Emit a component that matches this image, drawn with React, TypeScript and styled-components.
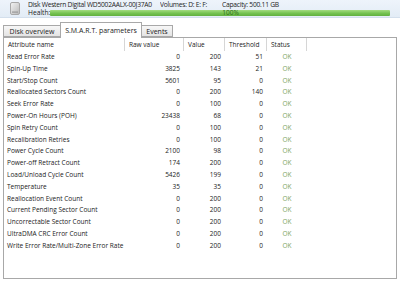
import { FC } from 'react';
import styled, { createGlobalStyle } from 'styled-components';

const GlobalStyle = createGlobalStyle`
  html, body {
    margin: 0;
    padding: 0;
    background: #ffffff;
  }
  body {
    font-family: "Open Sans", "Liberation Sans", sans-serif;
    color: #2b2b2b;
  }
`;

type Row = [string, number, number, number];

const rows: Row[] = [
  ['Read Error Rate', 0, 200, 51],
  ['Spin-Up Time', 3825, 143, 21],
  ['Start/Stop Count', 5601, 95, 0],
  ['Reallocated Sectors Count', 0, 200, 140],
  ['Seek Error Rate', 0, 100, 0],
  ['Power-On Hours (POH)', 23438, 68, 0],
  ['Spin Retry Count', 0, 100, 0],
  ['Recalibration Retries', 0, 100, 0],
  ['Power Cycle Count', 2100, 98, 0],
  ['Power-off Retract Count', 174, 200, 0],
  ['Load/Unload Cycle Count', 5426, 199, 0],
  ['Temperature', 35, 35, 0],
  ['Reallocation Event Count', 0, 200, 0],
  ['Current Pending Sector Count', 0, 200, 0],
  ['Uncorrectable Sector Count', 0, 200, 0],
  ['UltraDMA CRC Error Count', 0, 200, 0],
  ['Write Error Rate/Multi-Zone Error Rate', 0, 200, 0],
];

const columns = '121px 59px 41px 42px 40px 1fr';

const App: FC = () => {
  return (
    <Window>
      <GlobalStyle />
      <DiskHeader>
        <DiskIcon>
          <svg width="10" height="13" viewBox="0 0 10 13">
            <defs>
              <linearGradient id="dk" x1="0" y1="0" x2="1" y2="1">
                <stop offset="0" stopColor="#f4f4f4" />
                <stop offset="1" stopColor="#b8b8b8" />
              </linearGradient>
            </defs>
            <rect x="0.5" y="0.5" width="9" height="12" rx="1.5" fill="url(#dk)" stroke="#a8a8a8" />
            <rect x="2" y="9.5" width="6" height="1.2" fill="#9a9a9a" />
          </svg>
        </DiskIcon>
        <HeaderText>
          <InfoLine>
            <InfoItem $w={132}>Disk Western Digital WD5002AALX-00J37A0</InfoItem>
            <InfoItem $w={62}>Volumes: D: E: F:</InfoItem>
            <InfoItem>Capacity: 500.11 GB</InfoItem>
          </InfoLine>
          <HealthLine>
            <span>Health:</span>
            <HealthBar>
              <HealthLabel>100%</HealthLabel>
            </HealthBar>
          </HealthLine>
        </HeaderText>
      </DiskHeader>

      <Tabs>
        <Tab $w={58}>Disk overview</Tab>
        <Tab $w={82} $active>S.M.A.R.T. parameters</Tab>
        <Tab $w={32}>Events</Tab>
      </Tabs>

      <Panel>
        <HeadRow>
          <HeadCell>Attribute name</HeadCell>
          <HeadCell>Raw value</HeadCell>
          <HeadCell>Value</HeadCell>
          <HeadCell>Threshold</HeadCell>
          <HeadCell>Status</HeadCell>
          <HeadCell $last />
        </HeadRow>
        {rows.map(([name, raw, value, threshold]) => (
          <DataRow key={name}>
            <Cell>{name}</Cell>
            <Cell $align="right">{raw}</Cell>
            <Cell $align="right">{value}</Cell>
            <Cell $align="right">{threshold}</Cell>
            <Status>OK</Status>
            <Cell />
          </DataRow>
        ))}
      </Panel>
    </Window>
  );
};

const Window = styled.div`
  width: 400px;
  height: 284px;
  overflow: hidden;
  font-size: 6.5px;
`;

const DiskHeader = styled.div`
  display: flex;
  align-items: center;
  height: 18px;
  padding-left: 10px;
  background: linear-gradient(#eef4fb, #e3ecf6);
  border-bottom: 1px solid #d3dfec;
  box-sizing: border-box;
`;

const DiskIcon = styled.div`
  width: 10px;
  height: 13px;
  margin-right: 8px;
  display: flex;
`;

const HeaderText = styled.div`
  flex: 1;
  display: flex;
  flex-direction: column;
  font-size: 6.7px;
`;

const InfoLine = styled.div`
  display: flex;
  line-height: 8px;
  letter-spacing: -0.25px;
  color: #222;
`;

const InfoItem = styled.span<{ $w?: number }>`
  flex: ${(p) => (p.$w ? `0 0 ${p.$w}px` : '1')};
  white-space: nowrap;
  overflow: hidden;
`;

const HealthLine = styled.div`
  display: flex;
  align-items: center;
  line-height: 7px;
  color: #222;
`;

const HealthBar = styled.div`
  position: relative;
  flex: 1;
  height: 6px;
  margin-right: 10px;
  background: linear-gradient(#a4dc82, #74c250 55%, #62b040);
  border-radius: 1px;
`;

const HealthLabel = styled.span`
  position: absolute;
  left: 172px;
  top: -1px;
  font-size: 6.5px;
  color: #2d6b17;
  line-height: 7px;
`;

const Tabs = styled.div`
  display: flex;
  align-items: flex-end;
  height: 19px;
  padding-left: 3px;
`;

const Tab = styled.div<{ $w: number; $active?: boolean }>`
  width: ${(p) => p.$w}px;
  height: ${(p) => (p.$active ? 16 : 12)}px;
  box-sizing: border-box;
  display: flex;
  align-items: ${(p) => (p.$active ? 'flex-start' : 'center')};
  justify-content: center;
  padding-top: ${(p) => (p.$active ? 3 : 0)}px;
  font-size: 7px;
  color: #222;
  border: 1px solid #a8a8a8;
  border-bottom: ${(p) => (p.$active ? 'none' : '1px solid #a8a8a8')};
  margin-left: ${(p) => (p.$active ? -1 : 0)}px;
  margin-right: ${(p) => (p.$active ? -1 : 0)}px;
  position: relative;
  z-index: ${(p) => (p.$active ? 2 : 1)};
  background: ${(p) => (p.$active ? '#ffffff' : 'linear-gradient(#f7f7f7, #e4e4e4)')};
  margin-bottom: ${(p) => (p.$active ? -1 : 0)}px;
`;

const Panel = styled.div`
  margin: 0 3px;
  height: 242px;
  border: 1px solid #a8a8a8;
  box-sizing: border-box;
  background: #ffffff;
`;

const HeadRow = styled.div`
  display: grid;
  grid-template-columns: ${columns};
  height: 13px;
`;

const HeadCell = styled.div<{ $last?: boolean }>`
  display: flex;
  align-items: center;
  padding-left: 4px;
  color: #222;
  border-right: ${(p) => (p.$last ? 'none' : '1px solid #d6d6d6')};
`;

const DataRow = styled.div`
  display: grid;
  grid-template-columns: ${columns};
  height: 11.8px;
  line-height: 11.8px;
`;

const Cell = styled.div<{ $align?: 'left' | 'right' }>`
  text-align: ${(p) => p.$align || 'left'};
  padding: 0 4px 0 3px;
  white-space: nowrap;
  color: #222;
`;

const Status = styled.div`
  text-align: center;
  color: #7ea564;
`;

export default App;
